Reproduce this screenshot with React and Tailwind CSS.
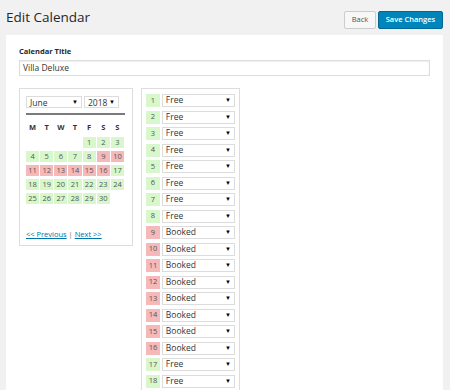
const booked = [9, 10, 11, 12, 13, 14, 15, 16];
const days = Array.from({ length: 30 }, (_, i) => i + 1);
const weekdays = ['M', 'T', 'W', 'T', 'F', 'S', 'S'];

function FakeSelect({ value, className }) {
  return (
    <div className={`flex items-center justify-between border border-[#dcdcdc] bg-white pl-[3px] pr-[3px] text-[#333] ${className}`}>
      <span>{value}</span>
      <span className="text-[6px] text-black">▼</span>
    </div>
  );
}

export default function App() {
  const cells = [null, null, null, null, ...days];

  return (
    <div className="h-[390px] overflow-hidden bg-[#f1f1f1] font-['Open_Sans',sans-serif]">
      {/* Header */}
      <div className="flex items-start justify-between pl-[6px] pr-[7px] pt-[7px] h-[35px]">
        <h1 className="text-[13.5px] leading-[20px] text-[#23282d]">Edit Calendar</h1>
        <div className="flex gap-[2px] mt-[4px]">
          <button className="h-[18px] w-[32px] rounded-[2px] border border-[#cccccc] bg-[#f7f7f7] text-[7.5px] text-[#555]">Back</button>
          <button className="h-[18px] w-[65px] rounded-[2px] border border-[#006799] bg-[#0085ba] text-[7.5px] font-semibold text-white">Save Changes</button>
        </div>
      </div>

      {/* Panel */}
      <div className="ml-[6px] mr-[7px] h-[400px] bg-white px-[13px] pt-[10px]">
        <div className="text-[7.5px] font-bold leading-[12px] text-[#23282d]">Calendar Title</div>
        <div className="mt-[3px] flex h-[16px] items-center border border-[#dddddd] px-[3px] text-[8.5px] text-[#32373c] shadow-[inset_0_1px_2px_rgba(0,0,0,0.07)]">Villa Deluxe</div>

        <div className="mt-[12px] flex items-start gap-[8px]">
          {/* Month calendar */}
          <div className="h-[158px] w-[114px] border border-[#dddddd] px-[6px] pt-[7px]">
            <div className="flex gap-[2px] text-[8.5px] leading-[9px]">
              <FakeSelect value="June" className="h-[12px] w-[56px]" />
              <FakeSelect value="2018" className="h-[12px] w-[35px]" />
            </div>
            <div className="mt-[5px] h-[2px] w-[99px] bg-[#7a7a7a]" />
            <div className="mt-[7px] grid w-[98px] grid-cols-7 gap-x-[1px] gap-y-[3px] text-center text-[7.5px] leading-[11px] text-[#555]">
              {weekdays.map((w, i) => (
                <div key={i} className="font-bold text-[#333] mb-[1px]">{w}</div>
              ))}
              {cells.map((d, i) => (
                <div
                  key={i}
                  className={`h-[11px] ${d === null ? '' : booked.includes(d) ? 'bg-[#f6b9b9]' : 'bg-[#d8f8cc]'}`}
                >
                  {d}
                </div>
              ))}
            </div>
            <div className="mt-[25px] text-[7.5px] leading-[10px] text-[#777]">
              <a href="#" className="text-[#0073aa] underline">&lt;&lt; Previous</a>
              {' | '}
              <a href="#" className="text-[#0073aa] underline">Next &gt;&gt;</a>
            </div>
          </div>

          {/* Day list */}
          <div className="w-[99px] border border-[#dddddd] px-[4px] pt-[5px] pb-[4px]">
            <div className="flex flex-col gap-[3.5px]">
              {days.slice(0, 18).map((d) => {
                const isBooked = booked.includes(d);
                return (
                  <div key={d} className="flex h-[13px] gap-[2px]">
                    <div className={`flex w-[14px] items-center justify-center text-[7.5px] text-[#555] ${isBooked ? 'bg-[#f6b9b9]' : 'bg-[#d8f8cc]'}`}>{d}</div>
                    <FakeSelect value={isBooked ? 'Booked' : 'Free'} className="h-[13px] w-[74px] text-[8.5px]" />
                  </div>
                );
              })}
            </div>
          </div>
        </div>
      </div>
    </div>
  );
}
